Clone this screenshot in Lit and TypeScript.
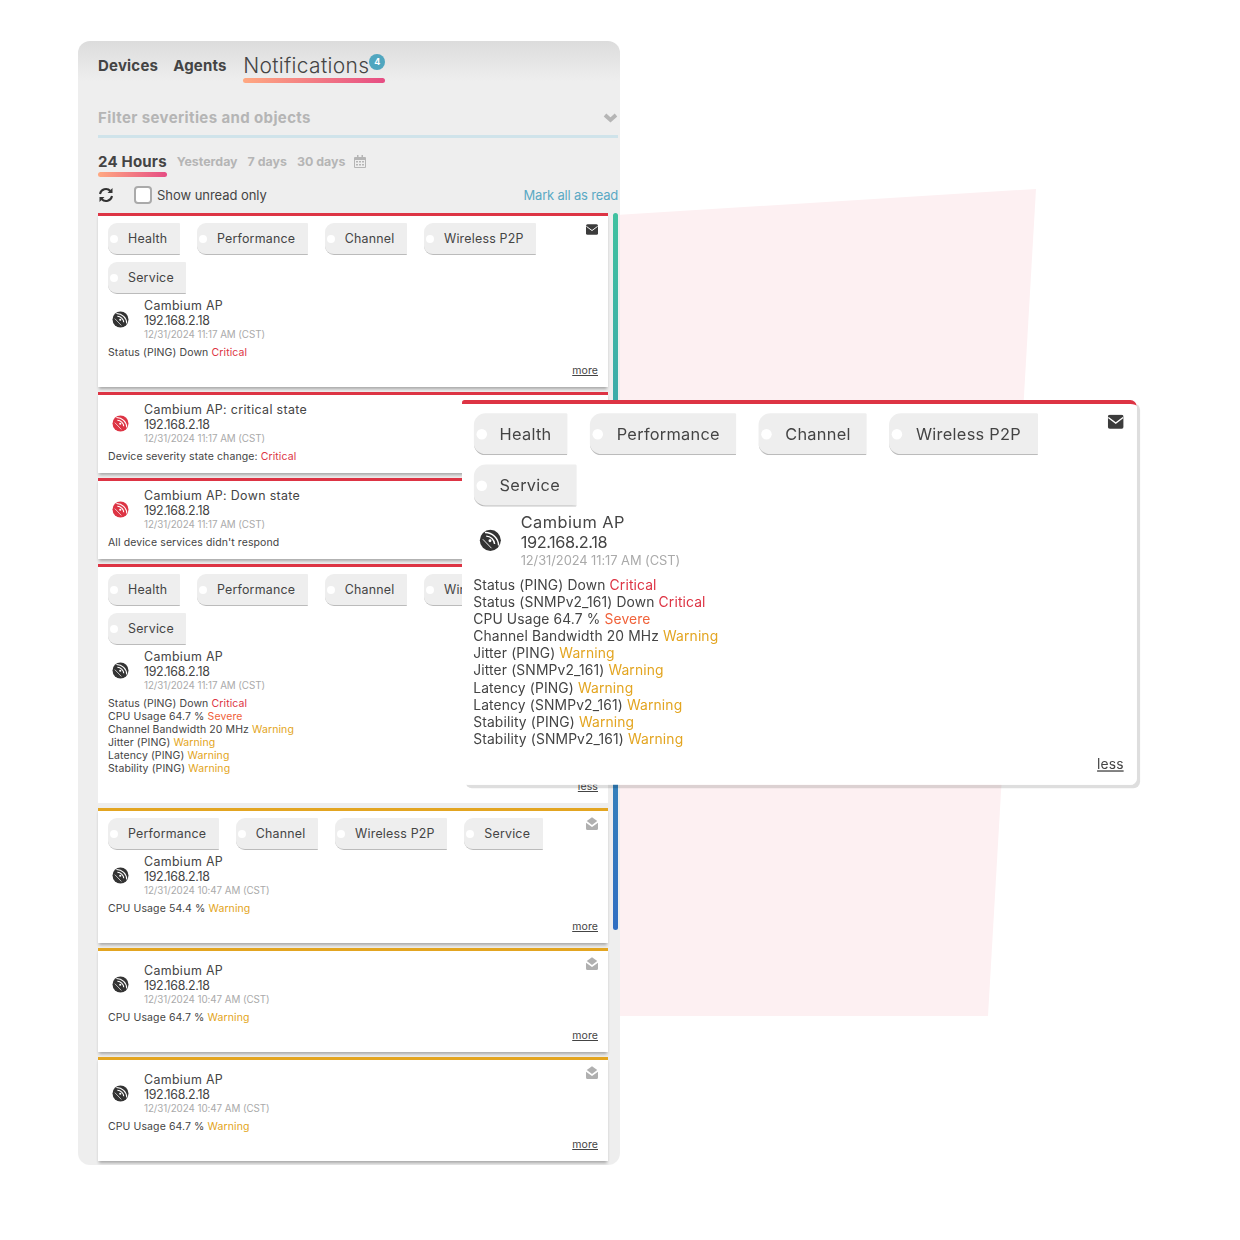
import { LitElement, html, css } from "lit";
import { customElement } from "lit/decorators.js";

type Sev = "Critical" | "Severe" | "Warning";
interface Card {
  sev: "crit" | "warn";
  read: boolean;
  tags: string[];
  title: string;
  alert: boolean;
  date: string;
  lines: [string, Sev | ""][];
  link: string;
}

const dish = (c: string) => html`<svg class="dish" viewBox="0 0 20 20">
  <circle cx="10" cy="10" r="9.400" fill="${c}"></circle>
  <path d="M5.200 2.900A12 12 0 0 1 17.400 14.600" fill="none" stroke="#fff" stroke-width="1.300"></path>
  <path d="M6.300 6.200A7.600 7.600 0 0 1 13.800 13.300" fill="none" stroke="#fff" stroke-width="1.300"></path>
  <path d="M3.300 9L11 17" fill="none" stroke="#fff" stroke-width=".8"></path>
  <circle cx="9.700" cy="10.300" r="1.300" fill="#fff"></circle>
</svg>`;

const closedMail = html`<svg class="mail" viewBox="0 0 16 14"><path fill="#3c3c3c" d="M2 0h12a2 2 0 0 1 2 2v10a2 2 0 0 1-2 2H2a2 2 0 0 1-2-2V2a2 2 0 0 1 2-2z"></path><path d="M.5 2.800L8 8.400l7.500-5.600" fill="none" stroke="#fff" stroke-width="1.300"></path></svg>`;
const openMail = html`<svg class="mail open" viewBox="0 0 16 17"><path fill="#b0b0b0" d="M8 0l7 5.200-7 5.300-7-5.300z"></path><path fill="#b0b0b0" d="M0 7.500l8 5.500 8-5.500V15a2 2 0 0 1-2 2H2a2 2 0 0 1-2-2z"></path></svg>`;

@customElement("notification-card")
class NotificationCard extends LitElement {
  static properties = { data: { attribute: false } };
  data!: Card;
  static styles = css`
    :host { display: block; font-family: Inter, "Noto Sans", sans-serif; color: #444; }
    .card { position: relative; background: #fff; border-top: 3px solid #dd3444; padding: 7px 10px 10px; box-shadow: 0 3px 3px -1px rgba(0,0,0,.3); }
    .card.warn { border-top-color: #e3a521; }
    .mailbox { position: absolute; top: 8px; right: 10px; line-height: 0; }
    .mailbox.read { top: 6px; }
    .mail { width: 12px; height: 11px; }
    .mail.open { height: 13px; }
    .tags { display: flex; flex-wrap: wrap; gap: 7px 17px; padding-right: 45px; margin-bottom: 4px; }
    .tag { position: relative; height: 32px; box-sizing: border-box; display: flex; align-items: center; padding: 0 12.5px 0 20px; background: #eee; border-radius: 9px 1px 1px 9px; border-bottom: 1px solid #bbb; font-size: 12.4px; letter-spacing: .22px; white-space: nowrap; }
    .tag::before { content: ""; position: absolute; left: 2px; top: 12px; width: 8px; height: 8px; border-radius: 50%; background: #fff; }
    .device { display: flex; align-items: center; }
    .device.spaced { margin-top: 5px; }
    .dishbox { width: 36px; padding-left: 4px; box-sizing: border-box; line-height: 0; }
    .dish { width: 17px; height: 17px; }
    .name { font-size: 12.4px; line-height: 15px; letter-spacing: .35px; }
    .ip { font-size: 12.4px; line-height: 15px; letter-spacing: -.3px; }
    .date { font-size: 9.8px; line-height: 13px; color: #aaa; letter-spacing: -.06px; }
    .lines { margin-top: 5px; font-size: 10.5px; line-height: 13px; letter-spacing: .1px; }
    .Critical { color: #dd3444; } .Severe { color: #f0623a; } .Warning { color: #e3a521; }
    .foot { display: flex; justify-content: flex-end; height: 13px; margin-top: 5px; font-size: 10.5px; line-height: 13px; letter-spacing: .1px; text-decoration: underline; }
    :host(.popup) .card { padding-left: 8.5px; padding-bottom: 9px; box-shadow: none; border-radius: 2px 5px 5px 5px; }
    :host(.popup) .device { margin-top: 1px; }
    :host(.popup) .lines { margin-top: 6px; }
    :host(.popup) .foot { margin-top: 6px; }
  `;
  render() {
    const d = this.data;
    return html`<div class="card ${d.sev}">
      ${d.alert ? "" : html`<div class="mailbox ${d.read ? "read" : ""}">${d.read ? openMail : closedMail}</div>`}
      ${d.tags.length ? html`<div class="tags">${d.tags.map((t) => html`<div class="tag">${t}</div>`)}</div>` : ""}
      <div class="device ${!d.tags.length && !d.alert ? "spaced" : ""}">
        <div class="dishbox">${dish(d.alert ? "#dd3444" : "#333")}</div>
        <div>
          <div class="name">${d.title}</div>
          <div class="ip">192.168.2.18</div>
          <div class="date">${d.date}</div>
        </div>
      </div>
      <div class="lines">${d.lines.map(([a, s]) => html`<div>${a} <span class="${s}">${s}</span></div>`)}</div>
      ${d.link ? html`<div class="foot">${d.link}</div>` : ""}
    </div>`;
  }
}

const T = ["Health", "Performance", "Channel", "Wireless P2P", "Service"];
const D1 = "12/31/2024 11:17 AM (CST)";
const D2 = "12/31/2024 10:47 AM (CST)";
const cards: Card[] = [
  { sev: "crit", read: false, tags: T, title: "Cambium AP", alert: false, date: D1, lines: [["Status (PING) Down", "Critical"]], link: "more" },
  { sev: "crit", read: false, tags: [], title: "Cambium AP: critical state", alert: true, date: D1, lines: [["Device severity state change:", "Critical"]], link: "" },
  { sev: "crit", read: false, tags: [], title: "Cambium AP: Down state", alert: true, date: D1, lines: [["All device services didn't respond", ""]], link: "" },
  { sev: "crit", read: false, tags: T, title: "Cambium AP", alert: false, date: D1, lines: [["Status (PING) Down", "Critical"], ["CPU Usage 64.7 %", "Severe"], ["Channel Bandwidth 20 MHz", "Warning"], ["Jitter (PING)", "Warning"], ["Latency (PING)", "Warning"], ["Stability (PING)", "Warning"]], link: "less" },
  { sev: "warn", read: true, tags: T.slice(1), title: "Cambium AP", alert: false, date: D2, lines: [["CPU Usage 54.4 %", "Warning"]], link: "more" },
  { sev: "warn", read: true, tags: [], title: "Cambium AP", alert: false, date: D2, lines: [["CPU Usage 64.7 %", "Warning"]], link: "more" },
  { sev: "warn", read: true, tags: [], title: "Cambium AP", alert: false, date: D2, lines: [["CPU Usage 64.7 %", "Warning"]], link: "more" },
];
const popup: Card = {
  sev: "crit", read: false, tags: T, title: "Cambium AP", alert: false, date: D1, link: "less",
  lines: [["Status (PING) Down", "Critical"], ["Status (SNMPv2_161) Down", "Critical"], ["CPU Usage 64.7 %", "Severe"], ["Channel Bandwidth 20 MHz", "Warning"], ["Jitter (PING)", "Warning"], ["Jitter (SNMPv2_161)", "Warning"], ["Latency (PING)", "Warning"], ["Latency (SNMPv2_161)", "Warning"], ["Stability (PING)", "Warning"], ["Stability (SNMPv2_161)", "Warning"]],
};

@customElement("app-root")
class AppRoot extends LitElement {
  static styles = css`
    :host { display: block; position: relative; height: 1240px; overflow: hidden; background: #fff; font-family: Inter, "Noto Sans", sans-serif; color: #444; }
    .bg { position: absolute; left: 0; top: 0; width: 1240px; height: 1240px; }
    .panel { position: relative; box-sizing: border-box; margin-left: 78px; top: 41px; width: 542px; height: 1124px; border-radius: 12px; overflow: hidden; background: linear-gradient(#dcdcdc, #eee 40px); padding: 0 2px 0 20px; }
    .tabs { display: flex; align-items: flex-start; height: 42px; padding-top: 13px; }
    .tab { font-size: 15px; font-weight: 700; line-height: 23px; margin-right: 15px; letter-spacing: .2px; color: #444; }
    .active { position: relative; margin-left: 1.5px; padding-right: 16px; height: 29px; font-size: 21px; font-weight: 300; line-height: 24px; letter-spacing: .32px; color: #444; }
    .active::after { content: ""; position: absolute; left: 0; right: 0; bottom: 0; height: 5px; border-radius: 3px; background: linear-gradient(90deg, #ffa982, #e64d84); }
    .badge { position: absolute; right: 0; top: 0; width: 16px; height: 16px; border-radius: 50%; background: #50a6bf; color: #fff; font-size: 9px; font-weight: 700; line-height: 16px; text-align: center; }
    .filter { display: flex; align-items: center; justify-content: space-between; height: 33px; margin-top: 5px; padding-bottom: 1px; border-bottom: 3px solid #cfe3ea; color: #b5b5b5; font-size: 15px; font-weight: 700; letter-spacing: .38px; }
    .chev { width: 15px; height: 10px; }
    .ranges { display: flex; align-items: flex-start; gap: 10px; margin-top: 14px; height: 25px; color: #b5b5b5; font-size: 12.4px; font-weight: 700; line-height: 19px; }
    .r24 { position: relative; height: 25px; font-size: 15px; line-height: 19px; color: #444; letter-spacing: .2px; }
    .r24::after { content: ""; position: absolute; left: 0; right: 0; bottom: 0; height: 5px; border-radius: 3px; background: linear-gradient(90deg, #ffa982, #e64d84); }
    .cal { width: 12px; height: 13px; margin-top: 3px; margin-left: -1px; }
    .tools { display: flex; align-items: center; height: 24px; margin-top: 6px; font-size: 13px; letter-spacing: -.05px; }
    .refresh { width: 16px; height: 16px; margin-right: 20px; }
    .check { width: 14px; height: 14px; border: 2px solid #aaa; border-radius: 4px; background: #fff; margin-right: 5px; }
    .mark { margin-left: auto; color: #5aa9c4; letter-spacing: -.2px; }
    .body { position: relative; margin-top: 6px; }
    .list { width: 510px; display: flex; flex-direction: column; gap: 5px; }
    .bar { position: absolute; left: 515px; top: 0; width: 5px; height: 717px; border-radius: 3px; background: linear-gradient(#3fc1a0, #2f6fc2); }
    .popup { position: absolute; left: 462px; top: 400px; width: 512px; transform-origin: 0 0; transform: scale(1.318); border-radius: 2px 5px 5px 5px; box-shadow: 2.500px 2.500px 0 rgba(0,0,0,.13); filter: blur(.3px); }
    .c4 { height: 239px; overflow: hidden; }
  `;
  render() {
    return html`
      <svg class="bg" viewBox="0 0 1240 1240"><path fill="#fdf0f2" d="M600 216L1036 189L988 1016H600z"></path></svg>
      <div class="panel">
        <div class="tabs">
          <div class="tab">Devices</div>
          <div class="tab">Agents</div>
          <div class="active">Notifications<span class="badge">4</span></div>
        </div>
        <div class="filter">
          <span>Filter severities and objects</span>
          <svg class="chev" viewBox="0 0 15 10"><path d="M2 2l5.500 5L13 2" fill="none" stroke="#b5b5b5" stroke-width="3.800"></path></svg>
        </div>
        <div class="ranges">
          <span class="r24">24 Hours</span><span>Yesterday</span><span>7 days</span><span>30 days</span>
          <svg class="cal" viewBox="0 0 12 13"><path fill="#b5b5b5" fill-rule="evenodd" d="M1 2h2V0h1.500v2h3V0H9v2h2a1 1 0 0 1 1 1v9a1 1 0 0 1-1 1H1a1 1 0 0 1-1-1V3a1 1 0 0 1 1-1zm0 3v7h10V5zm1 1h2v1.500H2zm3 0h2v1.500H5zm3 0h2v1.500H8zM2 9h2v1.500H2zm3 0h2v1.500H5zm3 0h2v1.500H8z"></path></svg>
        </div>
        <div class="tools">
          <svg class="refresh" viewBox="0 0 16 16"><path d="M2 7a6 6 0 0 1 10.400-3M14 9a6 6 0 0 1-10.400 3" fill="none" stroke="#333" stroke-width="2"></path><path d="M14.500 1v5h-5zM1.500 15v-5h5z" fill="#333"></path></svg>
          <span class="check"></span><span>Show unread only</span>
          <span class="mark">Mark all as read</span>
        </div>
        <div class="body">
          <div class="list">
            ${cards.map((c, i) => html`<notification-card class="${i === 3 ? "c4" : ""}" .data=${c}></notification-card>`)}
          </div>
          <div class="bar"></div>
        </div>
      </div>
      <notification-card class="popup" .data=${popup}></notification-card>
    `;
  }
}
